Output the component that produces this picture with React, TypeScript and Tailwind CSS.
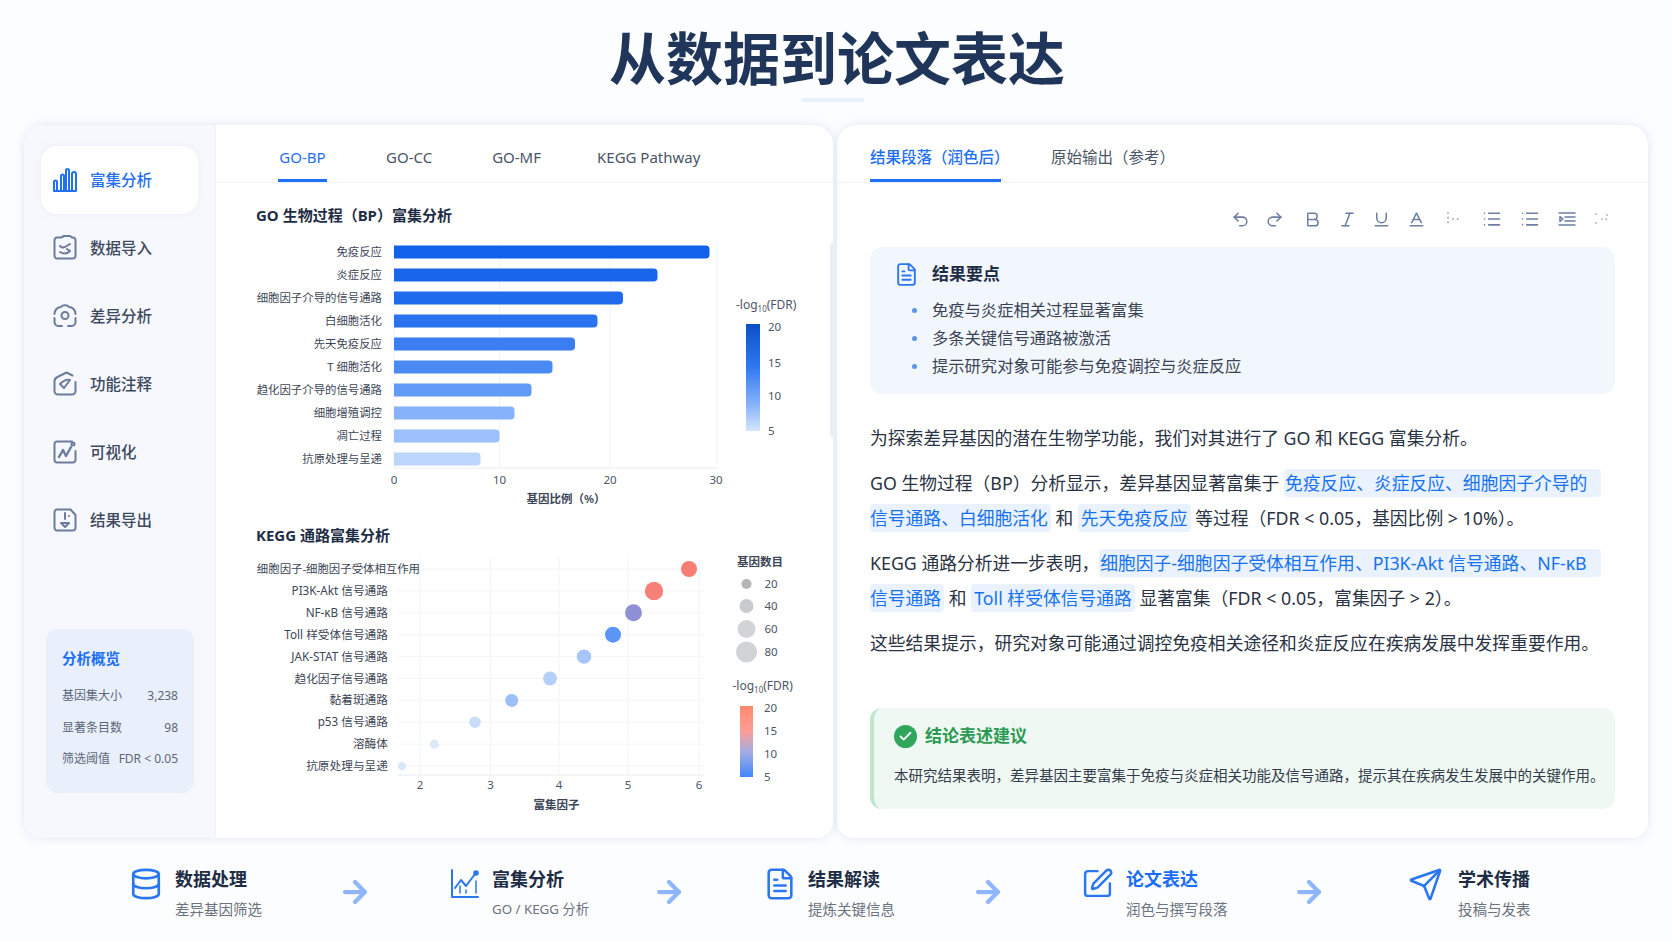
import React from 'react';
import {
  Bold,
  Check,
  Database,
  FileText,
  Italic,
  List,
  Redo2,
  Send,
  SquarePen,
  Underline,
  Undo2,
  ArrowRight,
  Baseline,
} from 'lucide-react';

const NavIcon = ({ name, active }: { name: string; active?: boolean }) => {
  const common = {
    width: 26,
    height: 26,
    viewBox: '0 0 26 26',
    fill: 'none',
    stroke: active ? '#1f70f2' : '#6c7c9c',
    strokeWidth: 2,
    strokeLinecap: 'round' as const,
    strokeLinejoin: 'round' as const,
  };
  if (name === 'bars') {
    return (
      <svg {...common}>
        <path d="M2 24h22M2 24v-9a1.5 1.5 0 0 1 3 0v9M9 24V9a1.5 1.5 0 0 1 3 0v15M14 24V3.500a1.500 1.500 0 0 1 3 0V24M20 24V7a1.800 1.800 0 0 1 4 0v17" />
      </svg>
    );
  }
  if (name === 'import') {
    return (
      <svg {...common}>
        <path d="M9 2.500H5a2.500 2.500 0 0 0-2.500 2.500v16A2.500 2.500 0 0 0 5 23.500h16a2.500 2.500 0 0 0 2.500-2.500V5A2.500 2.500 0 0 0 21 2.500h-1l-2-1.500h-6z" />
        <path d="M8 11c2 2 3 2 4 1M18 9l-5 3M8 17c3 2 7 2 10-1M15 14l3 2" />
      </svg>
    );
  }
  if (name === 'diff') {
    return (
      <svg {...common}>
        <path d="M2.500 11c0-4 3-7 6.500-7 1.500-2.500 6.500-2.500 8 0 3.500 0 6.500 3 6.500 7" />
        <circle cx="13" cy="12.500" r="3.500" />
        <path d="M2.500 15v4a4 4 0 0 0 4 4h3.500M23.500 15v4a4 4 0 0 1-4 4H16" />
      </svg>
    );
  }
  if (name === 'note') {
    return (
      <svg {...common}>
        <path d="M23.500 11v9a3.500 3.500 0 0 1-3.500 3.500H6A3.500 3.500 0 0 1 2.500 20V10c0-2 1-3 3-4l9-4.500 6 3" />
        <path d="M8 13l4 4 6-8c-3-1-7 1-10 4z" />
      </svg>
    );
  }
  if (name === 'viz') {
    return (
      <svg {...common}>
        <path d="M20 2.500H5A2.500 2.500 0 0 0 2.500 5v16A2.500 2.500 0 0 0 5 23.500h16a2.500 2.500 0 0 0 2.500-2.500v-9" />
        <path d="M7 18l4-7 3 6 5-9" strokeWidth={2.400} />
        <circle cx="21" cy="5" r="1.500" />
      </svg>
    );
  }
  return (
    <svg {...common}>
      <path d="M9 2.500H5A2.500 2.500 0 0 0 2.500 5v16A2.500 2.500 0 0 0 5 23.500h16a2.500 2.500 0 0 0 2.500-2.500V8l-5-5.500z" />
      <path d="M13 6v6M9 16h8l-4 4z" />
      <path d="M17 9h.01" />
    </svg>
  );
};

const navItems = [
  { icon: 'bars', label: '富集分析', active: true },
  { icon: 'import', label: '数据导入' },
  { icon: 'diff', label: '差异分析' },
  { icon: 'note', label: '功能注释' },
  { icon: 'viz', label: '可视化' },
  { icon: 'export', label: '结果导出' },
];

const Sidebar = () => (
  <aside className="flex h-full w-[192px] shrink-0 flex-col border-r border-[#f0f3f9] bg-[#f6f8fd] pt-[21px] pl-[17px] pr-[17px]">
    {navItems.map((item) => (
      <div
        key={item.label}
        className={`flex h-[68px] items-center gap-[12px] rounded-2xl pl-[11px] ${
          item.active ? 'bg-white text-[#1f70f2] shadow-[0_0_6px_rgba(225,233,246,0.5)]' : 'text-[#3e4a5f]'
        }`}
      >
        <NavIcon name={item.icon} active={item.active} />
        <span className="pt-[2px] text-[15.5px] font-medium">{item.label}</span>
      </div>
    ))}
    <div className="mt-[75px] ml-[5px] mr-[4px] h-[164px] rounded-xl bg-[#e9f0fb] px-[16px] pt-[17px]">
      <div className="text-[14.5px] font-bold leading-[24px] text-[#1a6ef5]">分析概览</div>
      <div className="mt-[15px] flex flex-col gap-[9.500px] text-[12px] leading-[22px] text-[#5d667a]">
        <div className="flex justify-between">
          <span>基因集大小</span>
          <span>3,238</span>
        </div>
        <div className="flex justify-between">
          <span>显著条目数</span>
          <span>98</span>
        </div>
        <div className="flex justify-between whitespace-nowrap">
          <span>筛选阈值</span>
          <span>FDR &lt; 0.05</span>
        </div>
      </div>
    </div>
  </aside>
);

const bars = [
  { label: '免疫反应', end: 709.5, color: '#1261ea' },
  { label: '炎症反应', end: 657.5, color: '#1a66eb' },
  { label: '细胞因子介导的信号通路', end: 623, color: '#1f6bee' },
  { label: '白细胞活化', end: 597.5, color: '#2a72ef' },
  { label: '先天免疫反应', end: 575, color: '#3a7ef2' },
  { label: 'T 细胞活化', end: 552.5, color: '#4a8af4' },
  { label: '趋化因子介导的信号通路', end: 531.5, color: '#629bf6' },
  { label: '细胞增殖调控', end: 514.5, color: '#86b2f9' },
  { label: '凋亡过程', end: 499.5, color: '#9cc0fb' },
  { label: '抗原处理与呈递', end: 480.5, color: '#bcd5fc' },
];

const BarChart = () => (
  <svg width={617} height={280} viewBox="216 230 617 280" className="block">
    <defs>
      <linearGradient id="fdrBlue" x1="0" y1="0" x2="0" y2="1">
        <stop offset="0" stopColor="#0b4fc4" />
        <stop offset="0.4" stopColor="#2f78f0" />
        <stop offset="0.75" stopColor="#86b2f9" />
        <stop offset="1" stopColor="#d6e5fd" />
      </linearGradient>
    </defs>
    {[394, 499.5, 610, 717].map((x) => (
      <line key={x} x1={x} x2={x} y1={241} y2={468} stroke="#f1f3f8" />
    ))}
    <line x1={394} x2={717} y1={468} y2={468} stroke="#e8ecf3" />
    {bars.map((b, i) => {
      const cy = 252 + i * 23;
      return (
        <g key={b.label}>
          <text x={382} y={cy + 4} textAnchor="end" fontSize={11.4} fill="#3c4656">
            {b.label}
          </text>
          <path
            d={`M394 ${cy - 6.5}H${b.end - 4}a4 4 0 0 1 4 4v5a4 4 0 0 1-4 4H394z`}
            fill={b.color}
          />
        </g>
      );
    })}
    {[
      ['0', 394],
      ['10', 499.5],
      ['20', 610],
      ['30', 716],
    ].map(([t, x]) => (
      <text key={t} x={x} y={484} textAnchor="middle" fontSize={11.5} fill="#4c5666">
        {t}
      </text>
    ))}
    <text x={566} y={503} textAnchor="middle" fontSize={11.5} fontWeight={600} fill="#3c4656">
      基因比例（%）
    </text>
    <text x={736} y={309} fontSize={12} fill="#4c5666">
      -log
      <tspan fontSize={8} dy={3}>
        10
      </tspan>
      <tspan dy={-3}>(FDR)</tspan>
    </text>
    <rect x={746} y={324} width={14} height={107} fill="url(#fdrBlue)" />
    {[
      ['20', 327],
      ['15', 362.5],
      ['10', 396],
      ['5', 431],
    ].map(([t, y]) => (
      <text key={t} x={768} y={Number(y) + 4} fontSize={11.5} fill="#4c5666">
        {t}
      </text>
    ))}
  </svg>
);

const dots = [
  { label: '细胞因子-细胞因子受体相互作用', x: 689, r: 8, color: '#f87d75' },
  { label: 'PI3K-Akt 信号通路', x: 654, r: 9.2, color: '#f98078' },
  { label: 'NF-κB 信号通路', x: 633.5, r: 8.5, color: '#8f8fd6' },
  { label: 'Toll 样受体信号通路', x: 613, r: 8, color: '#5b96f7' },
  { label: 'JAK-STAT 信号通路', x: 584, r: 7.2, color: '#a6c6fb' },
  { label: '趋化因子信号通路', x: 550, r: 6.9, color: '#b4cffb' },
  { label: '黏着斑通路', x: 511.7, r: 6.5, color: '#9dc0fa' },
  { label: 'p53 信号通路', x: 475, r: 5.7, color: '#c9dcfa' },
  { label: '溶酶体', x: 434.4, r: 4.6, color: '#dde9fb' },
  { label: '抗原处理与呈递', x: 402, r: 4.2, color: '#d9e7fb' },
];

const DotChart = () => (
  <svg width={617} height={291} viewBox="216 547 617 291" className="block">
    <defs>
      <linearGradient id="fdrHeat" x1="0" y1="0" x2="0" y2="1">
        <stop offset="0" stopColor="#ff8a6e" />
        <stop offset="0.35" stopColor="#fb9d96" />
        <stop offset="0.65" stopColor="#a3ade6" />
        <stop offset="1" stopColor="#3f88fb" />
      </linearGradient>
    </defs>
    {[420, 490.5, 559, 628, 699].map((x) => (
      <line key={x} x1={x} x2={x} y1={558} y2={775} stroke="#f1f3f8" />
    ))}
    <line x1={397} x2={704} y1={775} y2={775} stroke="#e8ecf3" />
    {dots.map((d, i) => {
      const cy = 569 + i * 21.9;
      return (
        <g key={d.label}>
          <line x1={397} x2={704} y1={cy} y2={cy} stroke="#f3f5f9" />
          <text x={i === 0 ? 420 : 388} y={cy + 4} textAnchor="end" fontSize={i === 0 ? 11.4 : 11.7} fill="#3c4656">
            {d.label}
          </text>
          <circle cx={d.x} cy={cy} r={d.r} fill={d.color} />
        </g>
      );
    })}
    {[
      ['2', 420],
      ['3', 490.5],
      ['4', 559],
      ['5', 628],
      ['6', 699],
    ].map(([t, x]) => (
      <text key={t} x={x} y={789} textAnchor="middle" fontSize={11.5} fill="#4c5666">
        {t}
      </text>
    ))}
    <text x={556.5} y={809} textAnchor="middle" fontSize={11.5} fontWeight={600} fill="#3c4656">
      富集因子
    </text>
    <text x={737} y={566} fontSize={11.5} fontWeight={600} fill="#3c4656">
      基因数目
    </text>
    {[
      { t: '20', y: 584, r: 5, c: '#b3b5b9' },
      { t: '40', y: 606, r: 7, c: '#c9cacd' },
      { t: '60', y: 629, r: 9, c: '#d2d3d6' },
      { t: '80', y: 652, r: 10.500, c: '#d2d3d6' },
    ].map((s) => (
      <g key={s.t}>
        <circle cx={746.5} cy={s.y} r={s.r} fill={s.c} />
        <text x={764.5} y={s.y + 4} fontSize={11.5} fill="#4c5666">
          {s.t}
        </text>
      </g>
    ))}
    <text x={732.5} y={689.5} fontSize={12} fill="#4c5666">
      -log
      <tspan fontSize={8} dy={3}>
        10
      </tspan>
      <tspan dy={-3}>(FDR)</tspan>
    </text>
    <rect x={740} y={706} width={13} height={71} fill="url(#fdrHeat)" />
    {[
      ['20', 708],
      ['15', 731],
      ['10', 753.7],
      ['5', 776.7],
    ].map(([t, y]) => (
      <text key={t} x={764} y={Number(y) + 4} fontSize={11.5} fill="#4c5666">
        {t}
      </text>
    ))}
  </svg>
);

const LeftPanel = () => (
  <section className="relative flex h-full w-[809px] overflow-hidden rounded-t-[20px] rounded-b-[16px] bg-white shadow-[0_0_10px_rgba(190,205,230,0.45)]">
    <Sidebar />
    <div className="w-[617px]">
      <div className="flex h-[58px] items-end border-b border-[#eef1f8] pl-[62px] text-[15px] text-[#4a5568]">
        <span className="flex h-[45px] w-[49px] items-start justify-center whitespace-nowrap border-b-[3px] border-[#1f70f2] pt-[9px] leading-[22px] text-[#1f70f2]">
          GO-BP
        </span>
        <span className="ml-[59px] h-[45px] pt-[9px] leading-[22px]">GO-CC</span>
        <span className="ml-[60px] h-[45px] pt-[9px] leading-[22px]">GO-MF</span>
        <span className="ml-[56px] h-[45px] pt-[9px] leading-[22px]">KEGG Pathway</span>
      </div>
      <h3 className="pt-[21px] pb-[4px] pl-[40px] text-[15px] font-bold leading-[22px] text-[#1e2d45]">
        GO 生物过程（BP）富集分析
      </h3>
      <BarChart />
      <h3 className="pt-[14px] pb-[1px] pl-[40px] text-[15px] font-bold leading-[22px] text-[#1e2d45]">KEGG 通路富集分析</h3>
      <DotChart />
    </div>
    <div className="absolute right-[-3px] top-[118px] h-[194px] w-[6px] rounded-full bg-[#e8edf6]" />
  </section>
);

const Mark = ({ children, className = '' }: { children: React.ReactNode; className?: string }) => (
  <span className={`rounded bg-[#e9f2fe] py-[2px] text-[#1772f0] ${className}`}>{children}</span>
);

const toolbarIcons = [
  { key: 'undo', x: Undo2 },
  { key: 'redo', x: Redo2 },
  { key: 'bold', x: Bold },
  { key: 'italic', x: Italic },
  { key: 'underline', x: Underline },
  { key: 'baseline', x: Baseline },
];

const RightPanel = () => (
  <section className="flex h-full w-[811px] flex-col rounded-t-[20px] rounded-b-[16px] bg-white shadow-[0_0_10px_rgba(190,205,230,0.45)]">
    <div className="flex h-[58px] shrink-0 items-end border-b border-[#eef1f8] pl-[33px] text-[15.5px] text-[#4a5568]">
      <span className="h-[45px] w-[131px] whitespace-nowrap border-b-[3px] border-[#1f70f2] pt-[9px] font-medium leading-[22px] text-[#1f70f2]">
        结果段落（润色后）
      </span>
      <span className="ml-[50px] h-[45px] pt-[9px] leading-[22px]">原始输出（参考）</span>
    </div>

    <div className="mt-[23px] flex h-[26px] items-center pl-[386px] text-[#6c7fa3]">
      {toolbarIcons.map((t, i) => (
        <span key={t.key} className={`flex w-[34.400px] justify-center ${i === 2 ? 'ml-[4px]' : ''}`}>
          <t.x size={19} strokeWidth={1.9} />
        </span>
      ))}
      <span className="ml-[7px] flex w-[30px] justify-center opacity-60">
        <svg width="18" height="16" viewBox="0 0 18 16" fill="none" stroke="currentColor" strokeWidth="2" strokeLinecap="round" strokeDasharray="0.100 4.500">
          <path d="M2 2v13M7 8h9" />
        </svg>
      </span>
      <span className="ml-[3px] flex w-[38px] justify-center">
        <List size={20} strokeWidth={1.9} />
      </span>
      <span className="flex w-[38px] justify-center">
        <List size={20} strokeWidth={1.9} />
      </span>
      <span className="flex w-[36px] justify-center">
        <svg width="18" height="16" viewBox="0 0 18 16" fill="none" stroke="currentColor" strokeWidth="1.500" strokeLinecap="round" strokeLinejoin="round">
          <path d="M1 2h16M7 6h10M7 10h10M1 14h16M2 5.500l3 2.500-3 2.500z" />
        </svg>
      </span>
      <span className="flex w-[34px] justify-center opacity-50">
        <svg width="16" height="14" viewBox="0 0 16 14" fill="none" stroke="currentColor" strokeWidth="2" strokeLinecap="round" strokeDasharray="0.100 4">
          <path d="M2 2l2 2M2 11h.1M8 7h.1M13 3l-1 6" />
        </svg>
      </span>
    </div>

    <div className="mt-[15px] ml-[33px] h-[147px] w-[745px] rounded-xl bg-[#f2f6fd] pt-[14px] pl-[24px]">
      <div className="flex h-[26px] items-center gap-[13px]">
        <FileText size={25} strokeWidth={1.8} className="text-[#2a77f0]" />
        <span className="text-[17px] font-bold text-[#1e2d45]">结果要点</span>
      </div>
      <ul className="mt-[9px] text-[16.300px] leading-[28px] text-[#3a4456]">
        {['免疫与炎症相关过程显著富集', '多条关键信号通路被激活', '提示研究对象可能参与免疫调控与炎症反应'].map((text) => (
          <li key={text} className="flex items-center">
            <span className="ml-[18px] mr-[15px] h-[5px] w-[5px] rounded-full bg-[#5b92ea]" />
            {text}
          </li>
        ))}
      </ul>
    </div>

    <div className="mt-[27px] ml-[33px] flex flex-col gap-[10px] whitespace-nowrap text-[17.800px] leading-[35px] text-[#2a3344]">
      <p>为探索差异基因的潜在生物学功能，我们对其进行了 GO 和 KEGG 富集分析。</p>
      <p>
        GO 生物过程（BP）分析显示，差异基因显著富集于 <Mark className="pl-[1px] pr-[14px]">免疫反应、炎症反应、细胞因子介导的</Mark>
        <br />
        <Mark className="pr-[3px]">信号通路、白细胞活化</Mark> 和 <Mark className="px-[3px]">先天免疫反应</Mark> 等过程（FDR &lt; 0.05，基因比例 &gt; 10%）。
      </p>
      <p>
        KEGG 通路分析进一步表明，<Mark className="pl-[1px] pr-[14px]">细胞因子-细胞因子受体相互作用、PI3K-Akt 信号通路、NF-κB</Mark>
        <br />
        <Mark className="pr-[3px]">信号通路</Mark> 和 <Mark className="px-[3px]">Toll 样受体信号通路</Mark> 显著富集（FDR &lt; 0.05，富集因子 &gt; 2）。
      </p>
      <p>这些结果提示，研究对象可能通过调控免疫相关途径和炎症反应在疾病发展中发挥重要作用。</p>
    </div>

    <div className="mt-[47px] ml-[33px] h-[101px] w-[745px] rounded-xl border-l-[4px] border-[#bde6cb] bg-[#eff8f3] pl-[20px] pt-[16px]">
      <div className="flex h-[24px] items-center gap-[8px]">
        <span className="flex h-[23px] w-[23px] items-center justify-center rounded-full bg-[#2fa65c] text-white">
          <Check size={15} strokeWidth={3} />
        </span>
        <span className="text-[17px] font-bold text-[#2a9a52]">结论表述建议</span>
      </div>
      <p className="mt-[15px] whitespace-nowrap text-[14.5px] leading-[24px] text-[#333c4a]">
        本研究结果表明，差异基因主要富集于免疫与炎症相关功能及信号通路，提示其在疾病发生发展中的关键作用。
      </p>
    </div>
  </section>
);

const LineChartIcon = () => (
  <svg width="30" height="30" viewBox="0 0 30 30" fill="none" stroke="#2a77f0" strokeWidth="2" strokeLinecap="round" strokeLinejoin="round">
    <path d="M2 1v27h26" />
    <path d="M5 19l6-8 5 6 9-12" />
    <circle cx="26" cy="4" r="1.800" fill="#2a77f0" />
    <path d="M10 24v-7M16 24v-3M26 24V12" strokeWidth="1.500" />
  </svg>
);

const FlowArrow = () => (
  <span className="flex w-[24px] shrink-0 justify-center pt-[8px] text-[#8fb6fb]">
    <ArrowRight size={34} strokeWidth={3} className="shrink-0" />
  </span>
);

const StepText = ({ title, sub, active, narrow }: { title: string; sub: string; active?: boolean; narrow?: boolean }) => (
  <div className="whitespace-nowrap">
    <div className={`text-[18px] font-bold leading-[24px] ${active ? 'text-[#1a6ef5]' : 'text-[#1e2d45]'}`}>{title}</div>
    <div className={`mt-[8px] leading-[20px] text-[#6b7280] ${narrow ? 'text-[13.300px]' : 'text-[14.5px]'}`}>{sub}</div>
  </div>
);

const Footer = () => (
  <footer className="flex items-start pl-[129px] pt-[29px]">
    <div className="flex w-[214px] gap-[12px]">
      <Database size={34} strokeWidth={1.9} className="shrink-0 text-[#2a77f0]" />
      <StepText title="数据处理" sub="差异基因筛选" />
    </div>
    <FlowArrow />
    <div className="ml-[83px] flex w-[207px] gap-[12px]">
      <span className="mt-[2px] shrink-0">
        <LineChartIcon />
      </span>
      <StepText title="富集分析" sub="GO / KEGG 分析" narrow />
    </div>
    <FlowArrow />
    <div className="ml-[82px] flex w-[213px] gap-[11px]">
      <FileText size={34} strokeWidth={1.8} className="shrink-0 text-[#2a77f0]" />
      <StepText title="结果解读" sub="提炼关键信息" />
    </div>
    <FlowArrow />
    <div className="ml-[81px] flex w-[216px] gap-[12px]">
      <SquarePen size={33} strokeWidth={1.8} className="shrink-0 text-[#2a77f0]" />
      <StepText title="论文表达" sub="润色与撰写段落" active />
    </div>
    <FlowArrow />
    <div className="ml-[87px] flex gap-[15px]">
      <Send size={35} strokeWidth={1.8} className="shrink-0 text-[#2a77f0]" />
      <StepText title="学术传播" sub="投稿与发表" />
    </div>
  </footer>
);

export default function App() {
  return (
    <div className="h-[941px] w-full overflow-hidden bg-[#fcfdfe] font-['Noto_Sans','Noto_Sans_CJK_SC',sans-serif]">
      <header className="flex h-[125px] flex-col items-center pt-[25px]">
        <h1 className="ml-[2px] text-[57px] font-bold leading-[66px] text-[#1f3559]">从数据到论文表达</h1>
        <div className="mt-[7px] mr-[8px] h-[4px] w-[63px] rounded-full bg-[#e8f0fb]" />
      </header>
      <main className="flex h-[713px] gap-[4px] pl-[24px]">
        <LeftPanel />
        <RightPanel />
      </main>
      <Footer />
    </div>
  );
}
